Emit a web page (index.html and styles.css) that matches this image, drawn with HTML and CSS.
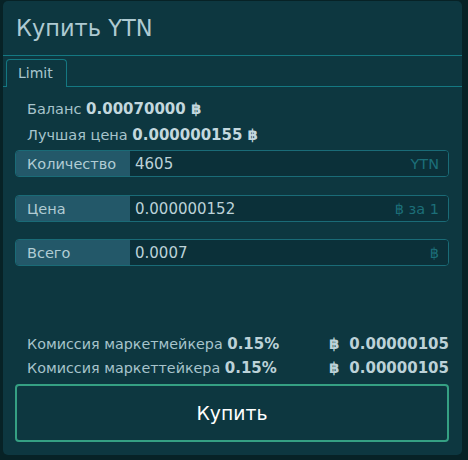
FILE: index.html
```html
<!DOCTYPE html>
<html lang="ru">
<head>
<meta charset="utf-8">
<link rel="stylesheet" href="styles.css">
</head>
<body>
<div class="panel">
  <div class="header"><h2 class="title">Купить YTN</h2></div>
  <div class="tabs"><div class="tab">Limit</div></div>
  <div class="content">
    <div class="info">Баланс <b>0.00070000 ฿</b></div>
    <div class="info">Лучшая цена <b>0.000000155 ฿</b></div>
    <div class="group first">
      <span class="addon">Количество</span>
      <span class="value">4605</span>
      <span class="unit">YTN</span>
    </div>
    <div class="group second">
      <span class="addon">Цена</span>
      <span class="value">0.000000152</span>
      <span class="unit">฿ за 1</span>
    </div>
    <div class="group third">
      <span class="addon">Всего</span>
      <span class="value">0.0007</span>
      <span class="unit">฿</span>
    </div>
    <div class="fees">
      <div class="fee"><span>Комиссия маркетмейкера <b>0.15%</b></span><span class="amount"><b class="cur">฿</b><b>0.00000105</b></span></div>
      <div class="fee"><span>Комиссия маркеттейкера <b>0.15%</b></span><span class="amount"><b class="cur">฿</b><b>0.00000105</b></span></div>
    </div>
    <button class="buy">Купить</button>
  </div>
</div>
</body>
</html>
```

FILE: styles.css
```css
html, body {
  margin: 0;
  padding: 0;
  background: #072226;
}
body {
  width: 468px;
  height: 460px;
  overflow: hidden;
  font-family: "DejaVu Sans", Verdana, sans-serif;
}
.panel {
  margin: 1px 6px 0 3px;
  height: 454px;
  background: #0d3740;
  border-radius: 5px;
  box-sizing: border-box;
}
.header {
  height: 54px;
  border-bottom: 1px solid #147882;
  display: flex;
  align-items: center;
  padding-left: 13px;
}
.title {
  margin: 0;
  font-weight: normal;
  font-size: 22.5px;
  color: #aecad2;
}
.tabs {
  padding: 3px 0 0 3px;
  border-bottom: 1px solid #147882;
  display: flex;
}
.tab {
  border: 1px solid #147882;
  border-bottom: none;
  border-radius: 4px 4px 0 0;
  background: #0d3740;
  width: 59px;
  height: 26px;
  margin-bottom: -1px;
  padding-bottom: 1px;
  box-sizing: content-box;
  font-size: 14px;
  color: #a9c6ce;
  display: flex;
  align-items: center;
  text-indent: 11px;
}
.content {
  padding: 9px 13px 0 12px;
  display: flex;
  flex-direction: column;
}
.info {
  padding-left: 12px;
  line-height: 26px;
  font-size: 14.5px;
  color: #a7c4cc;
}
.info b {
  font-size: 15px;
  color: #c3d8de;
}
.group {
  display: flex;
  height: 27px;
  border: 1px solid #1a6b77;
  border-radius: 4px;
  box-sizing: border-box;
  overflow: hidden;
  font-size: 14.5px;
  align-items: stretch;
}
.group.first {
  margin-top: 2px;
}
.group.second {
  margin-top: 18px;
}
.group.third {
  margin-top: 17px;
}
.addon {
  width: 114px;
  background: #235869;
  color: #b1ccd4;
  padding-left: 11px;
  box-sizing: border-box;
  display: flex;
  align-items: center;
}
.value {
  flex: 1;
  background: #0b3039;
  color: #bcd2d8;
  padding-left: 5px;
  font-size: 15px;
  display: flex;
  align-items: center;
}
.unit {
  background: #0b3039;
  color: #1c6e78;
  padding-right: 9px;
  display: flex;
  align-items: center;
}
.fees {
  margin-top: 66px;
  padding-left: 12px;
}
.fee {
  display: flex;
  justify-content: space-between;
  align-items: baseline;
  line-height: 24px;
  font-size: 14.3px;
  color: #a7c4cc;
}
.fee b {
  font-size: 15px;
  color: #bcd2d8;
}
.amount {
  display: flex;
  align-items: baseline;
  gap: 10px;
}
.buy {
  margin-top: 4px;
  height: 58px;
  border: 2px solid #35a083;
  border-radius: 4px;
  background: transparent;
  color: #ffffff;
  font-family: "DejaVu Sans", Verdana, sans-serif;
  font-size: 18.8px;
  padding: 0;
  cursor: pointer;
}
```
